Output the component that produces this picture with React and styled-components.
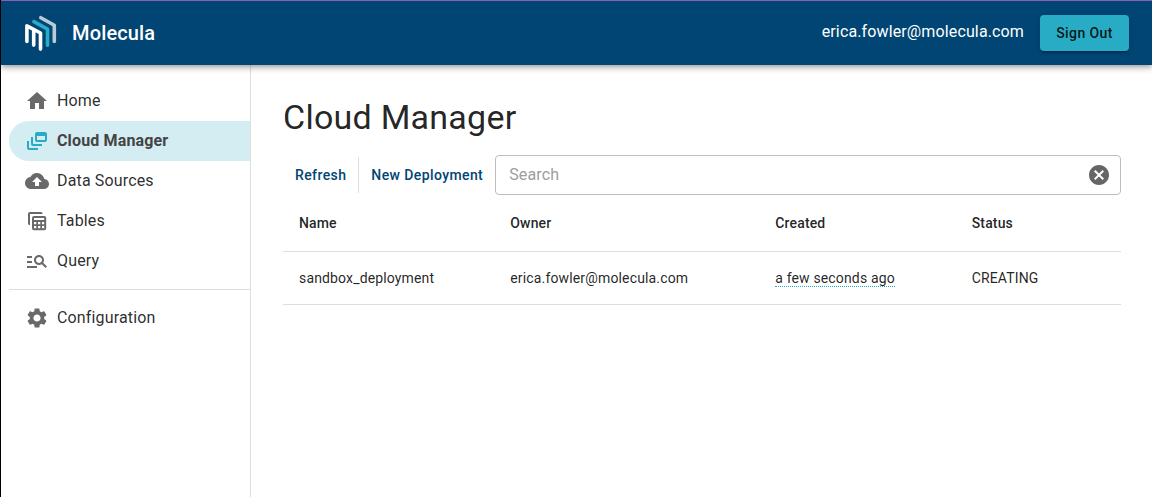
import React from 'react';
import styled, { createGlobalStyle } from 'styled-components';
import { MdHome, MdOutlineDynamicFeed, MdBackup, MdManageSearch, MdSettings, MdCancel } from 'react-icons/md';

const GlobalStyle = createGlobalStyle`
  *, *::before, *::after { box-sizing: border-box; }
  body {
    margin: 0;
    background: #fff;
    color: rgba(0, 0, 0, 0.87);
    font-family: Roboto, "Liberation Sans", sans-serif;
    font-size: 16px;
    -webkit-font-smoothing: antialiased;
  }
`;

const Page = styled.div`
  display: flex;
  flex-direction: column;
  height: 497px;
  overflow: hidden;
  border-left: 1px solid #000;
`;

const Header = styled.header`
  display: flex;
  align-items: center;
  flex: none;
  height: 65px;
  padding: 0 23px;
  border-top: 1px solid #8f5fae;
  background: #004573;
  color: #fff;
  z-index: 1;
  box-shadow: 0 2px 4px -1px rgba(0, 0, 0, 0.2), 0 4px 5px rgba(0, 0, 0, 0.14), 0 1px 10px rgba(0, 0, 0, 0.12);
`;

const Logo = styled.svg`
  width: 33px;
  height: 36px;
  overflow: visible;
  fill: none;
  stroke-width: 3.6;
  stroke-linecap: round;
  stroke-linejoin: round;
`;

const Brand = styled.div`
  margin-left: 15px;
  font-size: 20px;
  font-weight: 500;
  line-height: 32px;
  letter-spacing: 0.15px;
`;

const Email = styled.div`
  margin-left: auto;
  line-height: 24px;
  padding-bottom: 3px;
  letter-spacing: 0.13px;
`;

const SignOut = styled.button`
  width: 89px;
  height: 36px;
  margin-left: 16px;
  padding: 0;
  border: 0;
  border-radius: 4px;
  background: #28acc5;
  color: rgba(0, 0, 0, 0.87);
  font: 500 14px/24px Roboto, sans-serif;
  letter-spacing: 0.4px;
  box-shadow: 0 3px 1px -2px rgba(0, 0, 0, 0.2), 0 2px 2px rgba(0, 0, 0, 0.14), 0 1px 5px rgba(0, 0, 0, 0.12);
`;

const Body = styled.div`
  display: flex;
  flex: 1;
`;

const Sidebar = styled.nav`
  flex: none;
  width: 250px;
  padding: 16px 0 0 8px;
  border-right: 1px solid #dedede;
`;

const NavItem = styled.a`
  display: flex;
  align-items: center;
  height: 40px;
  padding-left: 16px;
  border-radius: 20px 0 0 20px;
  background: ${(p) => (p.$active ? '#d3edf2' : 'transparent')};
  color: ${(p) => (p.$active ? '#444' : 'rgba(0, 0, 0, 0.84)')};
  font-weight: ${(p) => (p.$active ? 700 : 400)};
  letter-spacing: 0.15px;

  svg {
    width: 24px;
    height: 24px;
    margin-right: 8px;
    color: ${(p) => (p.$active ? '#28acc5' : '#696969')};
  }
`;

const NavLabel = styled.span`
  padding-bottom: 2px;
`;

const NavDivider = styled.hr`
  height: 1px;
  margin: 8px 0;
  border: 0;
  background: #dedede;
`;

const Main = styled.main`
  flex: 1;
  padding: 31px 31px 0 32px;
`;

const Title = styled.h1`
  margin: 0;
  font-size: 34px;
  font-weight: 400;
  line-height: 42px;
  letter-spacing: 0.25px;
`;

const Toolbar = styled.div`
  display: flex;
  align-items: center;
  height: 40px;
  margin-top: 17px;
`;

const TextButton = styled.button`
  height: 36px;
  padding: 0 12px;
  border: 0;
  border-left: ${(p) => (p.$divided ? '1px solid #dedede' : '0')};
  background: transparent;
  color: #004573;
  font: 500 14px/24px Roboto, sans-serif;
  letter-spacing: 0.4px;
  white-space: nowrap;
`;

const SearchBox = styled.div`
  display: flex;
  align-items: center;
  flex: 1;
  height: 40px;
  padding: 0 9px 0 13px;
  border: 1px solid #bdbdbd;
  border-radius: 4px;

  svg {
    width: 24px;
    height: 24px;
    color: #666;
  }
`;

const SearchInput = styled.input`
  flex: 1;
  padding: 0 0 2px;
  border: 0;
  outline: 0;
  background: transparent;
  font: 400 16px/23px Roboto, sans-serif;
  letter-spacing: 0.15px;

  &::placeholder { color: #9d9d9d; opacity: 1; }
`;

const Table = styled.div`
  display: flex;
  flex-direction: column;
`;

const Row = styled.div`
  display: grid;
  grid-template-columns: 211.3px 265px 196.4px 1fr;
  align-items: center;
  height: ${(p) => (p.$head ? 57 : 53)}px;
  padding: 0 16px;
  border-bottom: 1px solid #dedede;
  font-size: 14px;
  font-weight: ${(p) => (p.$head ? 500 : 400)};
  line-height: 20px;
  letter-spacing: 0.15px;
`;

const Ago = styled.span`
  line-height: 16px;
  border-bottom: 1px dotted #28acc5;
`;

const TablesIcon = () => (
  <svg viewBox="0 0 24 24" fill="currentColor">
    <path d="M5 3h10.7a2 2 0 0 1 2 2H5v11.3a2 2 0 0 1-2-2V5a2 2 0 0 1 2-2z" />
    <path
      fillRule="evenodd"
      d="M9 7h10.2a2 2 0 0 1 2 2v10.2a2 2 0 0 1-2 2H9a2 2 0 0 1-2-2V9a2 2 0 0 1 2-2zM9 9v2h10.2V9zM9 12.9v2.3h2.3v-2.3zM13 12.9v2.3h2.3v-2.3zM17 12.9v2.3h2.2v-2.3zM9 17v2.2h2.3V17zM13 17v2.2h2.3V17zM17 17v2.2h2.2V17z"
    />
  </svg>
);

const navItems = [
  { label: 'Home', icon: <MdHome /> },
  { label: 'Cloud Manager', icon: <MdOutlineDynamicFeed />, active: true },
  { label: 'Data Sources', icon: <MdBackup /> },
  { label: 'Tables', icon: <TablesIcon /> },
  { label: 'Query', icon: <MdManageSearch /> },
];

export default function App() {
  return (
    <Page>
      <GlobalStyle />
      <Header>
        <Logo viewBox="24 15 33 36">
          <path d="M40.8 17.7L54.3 25.2V41.5" stroke="#b7cbd8" />
          <path d="M33.9 21.7L47.5 29.2V45.2" stroke="#28acc5" />
          <path d="M26.9 41.5V25.8L40.5 33V49.1M33.7 45.1V29.6" stroke="#fff" />
        </Logo>
        <Brand>Molecula</Brand>
        <Email>erica.fowler@molecula.com</Email>
        <SignOut>Sign Out</SignOut>
      </Header>
      <Body>
        <Sidebar>
          {navItems.map((item) => (
            <NavItem key={item.label} $active={item.active}>
              {item.icon}
              <NavLabel>{item.label}</NavLabel>
            </NavItem>
          ))}
          <NavDivider />
          <NavItem>
            <MdSettings />
            <NavLabel>Configuration</NavLabel>
          </NavItem>
        </Sidebar>
        <Main>
          <Title>Cloud Manager</Title>
          <Toolbar>
            <TextButton>Refresh</TextButton>
            <TextButton $divided>New Deployment</TextButton>
            <SearchBox>
              <SearchInput placeholder="Search" />
              <MdCancel />
            </SearchBox>
          </Toolbar>
          <Table>
            <Row $head>
              <div>Name</div>
              <div>Owner</div>
              <div>Created</div>
              <div>Status</div>
            </Row>
            <Row>
              <div>sandbox_deployment</div>
              <div>erica.fowler@molecula.com</div>
              <div><Ago>a few seconds ago</Ago></div>
              <div>CREATING</div>
            </Row>
          </Table>
        </Main>
      </Body>
    </Page>
  );
}
